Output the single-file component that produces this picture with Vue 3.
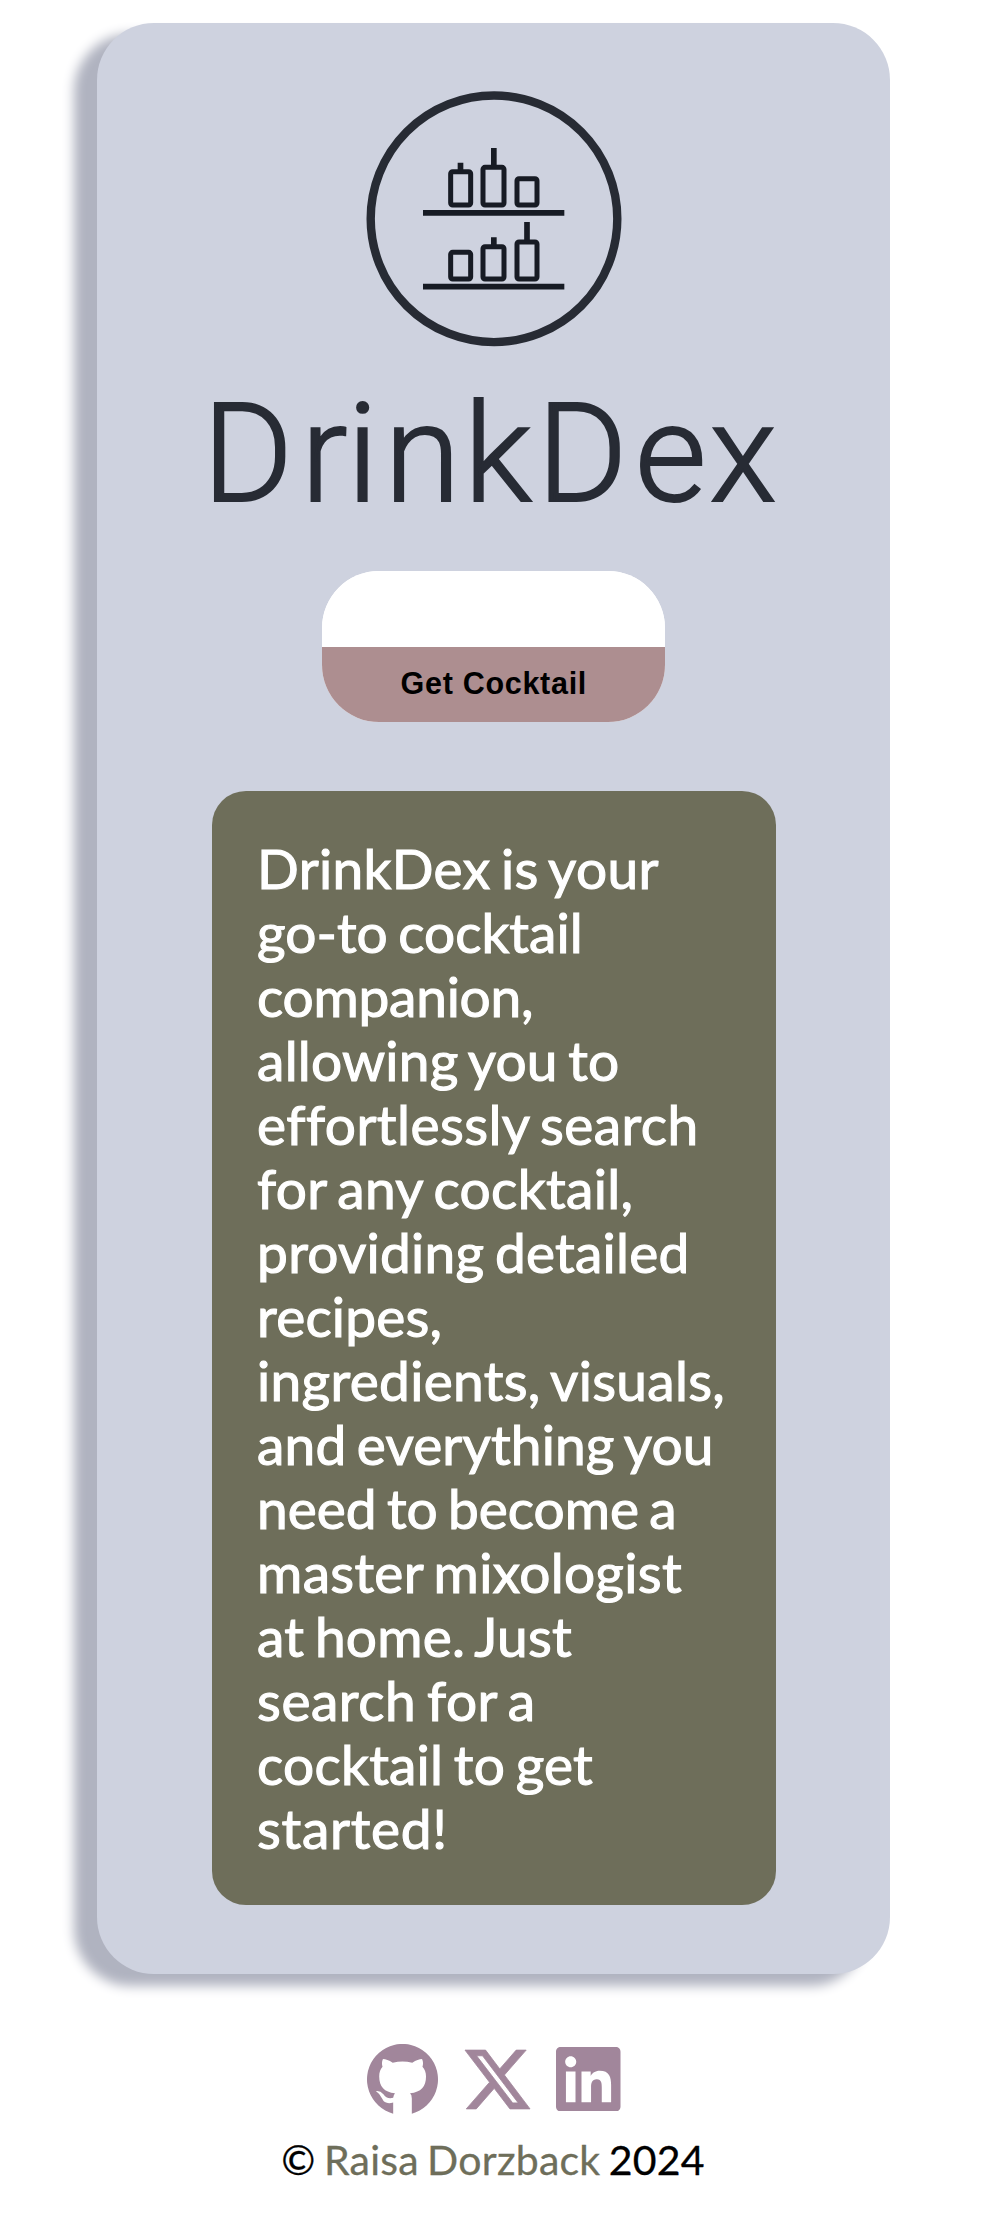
<script setup>
// Each line carries its tracking in pixels.
const lines = [
  ['DrinkDex is your', 0.33], ['go-to cocktail', 0.02], ['companion,', -0.25], ['allowing you to', 0.2],
  ['effortlessly search', 0.43], ['for any cocktail,', 0.35], ['providing detailed', 0.24], ['recipes,', 0.18],
  ['ingredients, visuals,', 0.31], ['and everything you', 0.14], ['need to become a', -0.02],
  ['master mixologist', 0.32], ['at home. Just', 0.25], ['search for a', 0.5],
  ['cocktail to get', 0.22], ['started!', 0.71]
]
</script>

<template>
  <div class="page">
    <main class="card">
      <svg class="logo" viewBox="0 0 568 428" role="img" aria-label="DrinkDex">
        <circle cx="282" cy="127.8" r="123.3" fill="none" stroke="#272b34" stroke-width="8.4" />
        <g transform="translate(138 -11) scale(.33333)" fill="none" stroke="#171b24" stroke-width="15">
          <rect x="302" y="275" width="60" height="100" rx="6" />
          <rect x="399" y="262" width="63" height="113" rx="6" />
          <rect x="501" y="296" width="60" height="79" rx="6" />
          <rect x="302" y="517" width="60" height="80" rx="6" />
          <rect x="399" y="500" width="63" height="97" rx="6" />
          <rect x="501" y="486" width="60" height="111" rx="6" />
          <path d="M331.500 248v24M431.500 204v54M431.500 472v24M531 426v56" stroke-width="17" />
          <path d="M219 398.500h424M219 620h424" stroke-width="17" />
        </g>
        <text class="name" x="-9.500 89 135 172.500 252 325 423 497.500" y="409.800">DrinkDex</text>
      </svg>

      <form class="search" @submit.prevent>
        <input type="text" aria-label="Cocktail" />
        <button type="submit">Get Cocktail</button>
      </form>

      <p class="intro">
        <span v-for="[line, tracking] in lines" :key="line" :style="{ letterSpacing: tracking + 'px' }">{{ line }}</span>
      </p>
    </main>

    <footer>
      <div class="social">
        <svg class="github" viewBox="0 0 16 16"><path d="M5.900 15.700A8 8 0 1 1 10.100 15.700V12.300Q10.100 11.400 9.700 11.100C12.200 10.800 13.300 9.600 13.300 7.300C13.300 6.300 13 5.700 12.500 5.100Q12.800 4.200 12.400 3.400Q11.500 3.400 10.200 4.200Q8 3.700 5.800 4.200Q4.500 3.400 3.600 3.400Q3.200 4.200 3.500 5.100C3 5.700 2.750 6.300 2.750 7.300C2.750 9.600 3.900 10.800 6.300 11.100Q6 11.500 5.900 12.100C4.900 12.400 4.200 12 3.700 11.300Q2.900 10.400 2 10.600Q3 11.300 3.400 12.300Q4 13.700 5.900 13.200Z" /></svg>
        <svg class="x" viewBox="26.800 48 460.200 416"><path d="M389.200 48h70.600L305.600 224.200 487 464H345L233.700 318.600 106.500 464H35.800L200.700 275.500 26.800 48H172.400L272.900 180.900 389.200 48zM364.400 421.800h39.100L151.100 88h-42L364.400 421.800z" /></svg>
        <svg class="linkedin" viewBox="0 32 448 448"><path d="M416 32H31.900C14.300 32 0 46.500 0 64.300v383.400C0 465.500 14.300 480 31.900 480H416c17.600 0 32-14.500 32-32.300V64.300c0-17.800-14.400-32.300-32-32.300zM135.400 416H69V202.200h66.500V416zm-33.200-243c-21.300 0-38.500-17.300-38.500-38.500S80.900 96 102.200 96c21.200 0 38.500 17.300 38.500 38.500 0 21.300-17.200 38.500-38.500 38.500zm282.100 243h-66.400V312c0-24.800-.5-56.700-34.500-56.700-34.600 0-39.900 27-39.900 54.900V416h-66.400V202.200h63.700v29.200h.9c8.900-16.800 30.600-34.500 62.200-34.500 66.500 0 78.900 43.800 78.900 100.900V416z" /></svg>
      </div>
      <p class="copy">© <a>Raisa Dorzback</a> 2024</p>
    </footer>
  </div>
</template>

<style>
body { background: #fff; }
</style>

<style scoped>
.page {
  box-sizing: border-box;
  height: 2230px;
  padding: 23px 0 0 97.300px;
  font-family: Lato, sans-serif;
}
.card {
  box-sizing: border-box;
  width: 793px;
  height: 1951.300px;
  padding: 68px 114.500px 0;
  border-radius: 57px;
  background: #ced2df;
  box-shadow: -23px 11.500px 11.500px #b0b3c0;
}
.logo {
  display: block;
  width: 568px;
  height: 428px;
  overflow: visible;
}
.name {
  font-family: Roboto, sans-serif;
  font-size: 138px;
  font-weight: 300;
  fill: #272b34;
  stroke: #272b34;
  stroke-width: 2px;
}
.search {
  width: 343px;
  height: 151px;
  margin: 52px 0 0 110.500px;
  border-radius: 57px;
  overflow: hidden;
  background: #fff;
}
.search input,
.search button {
  display: block;
  box-sizing: border-box;
  width: 100%;
  margin: 0;
  border: 0;
}
.search input { height: 76px; background: #fff; }
.search button {
  height: 75px;
  padding: 0 0 2px;
  background: #ad8e90;
  color: #000;
  font: bold 30.500px "Liberation Sans", Arial, sans-serif;
  letter-spacing: .7px;
}
.intro {
  box-sizing: border-box;
  width: 564.500px;
  height: 1113.700px;
  margin: 69px 0 0;
  padding: 46px 0 0 45.300px;
  border-radius: 34px;
  background: #6e6e5a;
  color: #fff;
  font-size: 55px;
  line-height: 63.970px;
  word-spacing: -3.700px;
  -webkit-text-stroke: 1.100px #fff;
}
.intro span { display: block; white-space: nowrap; }
.social {
  display: flex;
  align-items: flex-start;
  margin: 69.500px 0 0 269.500px;
  fill: #a1869b;
}
.github { width: 71px; height: 71px; }
.x { width: 65px; height: 59px; margin: 6px 0 0 27px; overflow: visible; stroke: #a1869b; stroke-width: 6px; }
.linkedin { width: 64.500px; height: 64.500px; margin: 3px 0 0 26.500px; }
.copy {
  margin: 20px 0 0 184px;
  color: #000;
  font-size: 41px;
  line-height: 50px;
  white-space: nowrap;
  word-spacing: -2.500px;
  letter-spacing: .250px;
  -webkit-text-stroke: .300px currentColor;
}
.copy a { color: #6e6e5a; }
</style>
